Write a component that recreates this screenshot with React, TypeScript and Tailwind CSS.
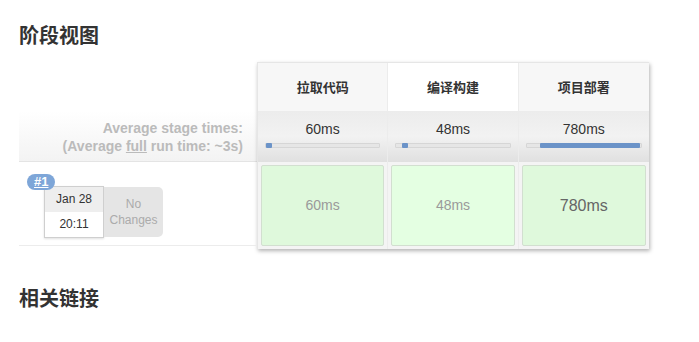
import React from "react";

const LATIN = "font-['Liberation_Sans','Noto_Sans_CJK_SC',sans-serif]";

type Stage = { name: string; avg: string; barLeft: number; barWidth: number; headBg: string; cellBg: string; big?: boolean };

const stages: Stage[] = [
  { name: "拉取代码", avg: "60ms", barLeft: 0, barWidth: 6, headBg: "bg-[#f7f7f7]", cellBg: "bg-[#dff9dc]" },
  { name: "编译构建", avg: "48ms", barLeft: 6, barWidth: 6, headBg: "bg-white", cellBg: "bg-[#e4ffe2]" },
  { name: "项目部署", avg: "780ms", barLeft: 13, barWidth: 100, headBg: "bg-[#f7f7f7]", cellBg: "bg-[#dff9dc]", big: true },
];

export default function App() {
  return (
    <div className={`h-[342px] w-[699px] bg-white pl-[19px] pt-[22px] text-[#333] ${LATIN}`}>
      <h2 className="text-[20px] font-bold leading-[28px]">阶段视图</h2>

      <div className="mt-[12px] flex">
        {/* left column */}
        <div className="flex w-[238px] flex-col">
          <div className="h-[49px]" />
          <div className="flex h-[51px] flex-col items-end justify-center border-b border-[#e4e4e4] bg-gradient-to-b from-white to-[#f3f3f3] pr-[14px] pt-[2px] text-[14px] font-bold leading-[18px] text-[#bbbbbb]">
            <span>Average stage times:</span>
            <span>
              (Average <span className="underline">full</span> run time: ~3s)
            </span>
          </div>
          <div className="relative h-[84px] border-b border-[#ececec]">
            <span className="absolute left-[8px] top-[12px] z-10 rounded-[8px] bg-[#7ea6d8] px-[7px] text-[13px] font-bold leading-[16px] text-white underline">
              #1
            </span>
            <div className="absolute left-[25px] top-[24px] flex">
              <div className="w-[60px] border border-[#cfcfcf] bg-white text-center text-[12px] leading-[25px] text-[#333] shadow-[0_1px_2px_rgba(0,0,0,0.12)]">
                <div className="bg-[#eeeeee]">Jan 28</div>
                <div>20:11</div>
              </div>
              <div className="mt-[1px] flex h-[50px] w-[59px] flex-col items-center justify-center rounded-r-[5px] bg-[#e5e5e5] text-[12px] leading-[16px] text-[#ababab]">
                <span>No</span>
                <span>Changes</span>
              </div>
            </div>
          </div>
        </div>

        {/* stage table */}
        <div className="flex w-[392px] border-l border-t border-[#e6e6e6] shadow-[1px_2px_4px_rgba(0,0,0,0.3)]">
          {stages.map((s, i) => (
            <div key={s.name} className={`flex w-[130.6px] flex-col ${i < 2 ? "border-r border-[#ececec]" : ""}`}>
              <div className={`flex h-[48px] items-center justify-center ${s.headBg} font-['Noto_Sans_CJK_SC',sans-serif] text-[13px] font-bold text-[#333]`}>
                {s.name}
              </div>
              <div className="h-[51px] bg-gradient-to-b from-[#ececec] via-[#f2f2f2] to-[#e0e0e0] px-[7px] pt-[8px]">
                <div className="text-center text-[14px] leading-[20px] text-[#333]">{s.avg}</div>
                <div className="relative mt-[4px] h-[5px] rounded-[1px] border border-[#d6d6d6] bg-[#e6e6e6]">
                  <div
                    className="absolute top-[-1px] h-[5px] rounded-[1px] bg-[#6b93c8]"
                    style={{ left: s.barLeft, width: s.barWidth }}
                  />
                </div>
              </div>
              <div className="h-[87px] bg-[#f4f4f4] p-[3px]">
                <div
                  className={`flex h-full items-center justify-center rounded-[2px] border border-[#d2dfd0] ${s.cellBg} ${
                    s.big ? "text-[16px] text-[#666]" : "text-[14px] text-[#9a9a9a]"
                  }`}
                >
                  {s.avg}
                </div>
              </div>
            </div>
          ))}
        </div>
      </div>

      <h2 className="mt-[36px] text-[20px] font-bold leading-[28px]">相关链接</h2>
    </div>
  );
}
